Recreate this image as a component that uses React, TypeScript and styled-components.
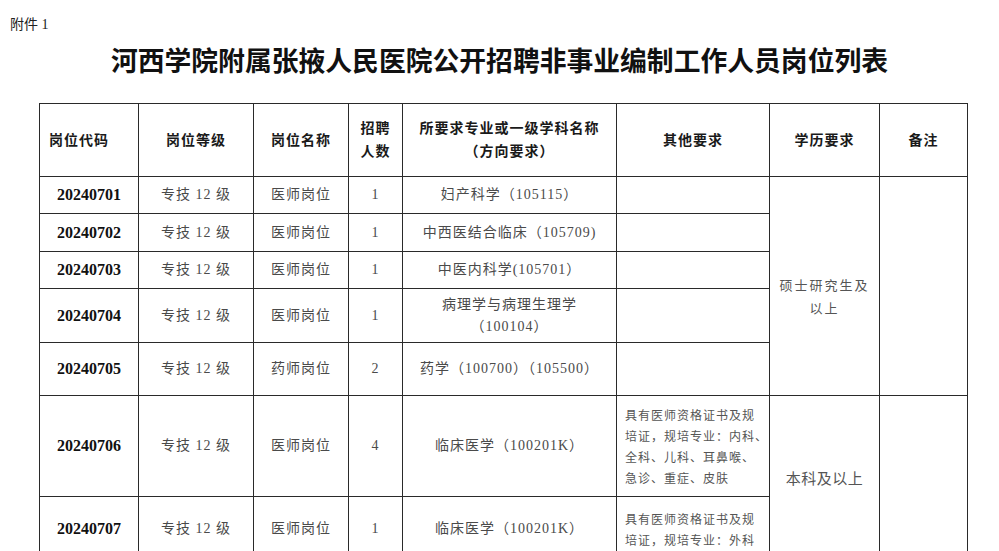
import React from 'react'
import styled, { createGlobalStyle } from 'styled-components'

const GlobalStyle = createGlobalStyle`
	html, body {
		margin: 0;
		padding: 0;
		background: #fff;
	}
	body {
		font-family: "Liberation Serif", "Noto Sans CJK SC", serif;
		color: #333;
	}
`

const Page = styled.div`
	width: 999px;
	height: 551px;
	overflow: hidden;
	padding-top: 15px;
	box-sizing: border-box;
`

const Note = styled.div`
	padding-left: 10px;
	font-size: 14px;
	line-height: 20px;
	color: #222;
`

const Title = styled.h1`
	margin: 7px 0 25px;
	text-align: center;
	font-family: "Noto Sans CJK SC", sans-serif;
	font-size: 26.8px;
	font-weight: 700;
	line-height: 36px;
	color: #111;
`

const Sheet = styled.table`
	margin-left: 39px;
	width: 928px;
	table-layout: fixed;
	border-collapse: collapse;
`

const Col = styled.col<{ $w: number }>`
	width: ${p => p.$w}px;
`

const Row = styled.tr<{ $h: number }>`
	height: ${p => p.$h}px;
`

const HeadCell = styled.th<{ $left?: boolean }>`
	border: 1px solid #2a2a2a;
	padding: ${p => p.$left ? '0 0 0 9px' : '0'};
	text-align: ${p => p.$left ? 'left' : 'center'};
	vertical-align: middle;
	font-family: "Liberation Serif", "Noto Sans CJK SC", serif;
	font-size: 14px;
	font-weight: 700;
	letter-spacing: 1px;
	line-height: 23px;
	color: #1a1a1a;
`

const CodeCell = styled.td`
	border: 1px solid #2a2a2a;
	text-align: center;
	vertical-align: middle;
	font-size: 16px;
	font-weight: 700;
	color: #111;
`

const Cell = styled.td`
	border: 1px solid #2a2a2a;
	text-align: center;
	vertical-align: middle;
	font-size: 14px;
	letter-spacing: 1px;
	line-height: 22px;
	color: #4a4a4a;
`

const NoteCell = styled.td`
	border: 1px solid #2a2a2a;
	padding: 0 3px 0 8px;
	text-align: left;
	vertical-align: middle;
	font-family: "Noto Sans CJK SC", sans-serif;
	font-size: 12px;
	letter-spacing: 1px;
	line-height: 21px;
	white-space: nowrap;
	color: #555;
`

const EduCell = styled.td<{ $size: number; $spacing: number; $shift: number }>`
	border: 1px solid #2a2a2a;
	padding-top: ${p => p.$shift}px;
	text-align: center;
	vertical-align: middle;
	font-family: "Noto Sans CJK SC", sans-serif;
	font-size: ${p => p.$size}px;
	letter-spacing: ${p => p.$spacing}px;
	line-height: 23px;
	color: #555;
`

const EmptyCell = styled.td`
	border: 1px solid #2a2a2a;
`

interface Post {
	code: string;
	grade: string;
	name: string;
	count: string;
	major: string[];
	other: string[];
	h: number;
}

const posts: Post[] = [
	{ code: '20240701', grade: '专技 12 级', name: '医师岗位', count: '1', major: ['妇产科学（105115）'], other: [], h: 37 },
	{ code: '20240702', grade: '专技 12 级', name: '医师岗位', count: '1', major: ['中西医结合临床（105709)'], other: [], h: 38 },
	{ code: '20240703', grade: '专技 12 级', name: '医师岗位', count: '1', major: ['中医内科学(105701）'], other: [], h: 37 },
	{ code: '20240704', grade: '专技 12 级', name: '医师岗位', count: '1', major: ['病理学与病理生理学', '（100104）'], other: [], h: 54 },
	{ code: '20240705', grade: '专技 12 级', name: '药师岗位', count: '2', major: ['药学（100700）（105500）'], other: [], h: 53 },
	{
		code: '20240706', grade: '专技 12 级', name: '医师岗位', count: '4', major: ['临床医学（100201K）'],
		other: ['具有医师资格证书及规', '培证，规培专业：内科、', '全科、儿科、耳鼻喉、', '急诊、重症、皮肤'], h: 101
	},
	{
		code: '20240707', grade: '专技 12 级', name: '医师岗位', count: '1', major: ['临床医学（100201K）'],
		other: ['具有医师资格证书及规', '培证，规培专业：外科'], h: 64
	}
]

const lines = (list: string[]) => list.map((t, i) => (
	<React.Fragment key={i}>
		{i > 0 && <br />}
		{t}
	</React.Fragment>
))

const App: React.FC = () => {
	return (
		<Page>
			<GlobalStyle />
			<Note>附件 1</Note>
			<Title>河西学院附属张掖人民医院公开招聘非事业编制工作人员岗位列表</Title>

			<Sheet>
				<colgroup>
					<Col $w={99} />
					<Col $w={115} />
					<Col $w={95} />
					<Col $w={54} />
					<Col $w={214} />
					<Col $w={153} />
					<Col $w={110} />
					<Col $w={88} />
				</colgroup>
				<thead>
					<Row $h={73}>
						<HeadCell $left>岗位代码</HeadCell>
						<HeadCell>岗位等级</HeadCell>
						<HeadCell>岗位名称</HeadCell>
						<HeadCell>招聘<br />人数</HeadCell>
						<HeadCell>所要求专业或一级学科名称<br />（方向要求）</HeadCell>
						<HeadCell>其他要求</HeadCell>
						<HeadCell>学历要求</HeadCell>
						<HeadCell>备注</HeadCell>
					</Row>
				</thead>
				<tbody>
					{posts.map((p, i) => (
						<Row key={p.code} $h={p.h}>
							<CodeCell>{p.code}</CodeCell>
							<Cell>{p.grade}</Cell>
							<Cell>{p.name}</Cell>
							<Cell>{p.count}</Cell>
							<Cell>{lines(p.major)}</Cell>
							<NoteCell>{lines(p.other)}</NoteCell>
							{i === 0 && (
								<EduCell rowSpan={5} $size={13} $spacing={2} $shift={20}>
									硕士研究生及<br />以上
								</EduCell>
							)}
							{i === 5 && (
								<EduCell rowSpan={2} $size={15} $spacing={0.5} $shift={0}>
									本科及以上
								</EduCell>
							)}
							{i === 0 && <EmptyCell rowSpan={5} />}
							{i === 5 && <EmptyCell rowSpan={2} />}
						</Row>
					))}
				</tbody>
			</Sheet>
		</Page>
	)
}

export default App
